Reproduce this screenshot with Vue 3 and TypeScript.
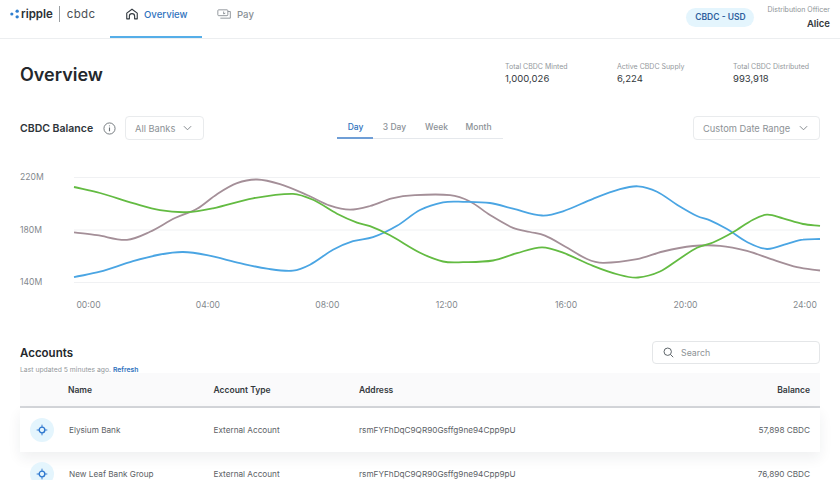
<template>
  <div class="page">
    <header class="topbar">
      <div class="brand">
        <svg class="brand-mark" viewBox="0 0 12 12" width="10" height="10">
          <circle cx="2.2" cy="6" r="1.9" fill="#2f7fd0" />
          <circle cx="8.6" cy="2.6" r="2" fill="#2f7fd0" />
          <circle cx="8.6" cy="9.4" r="2" fill="#2f7fd0" />
        </svg>
        <span class="brand-name">ripple</span>
        <span class="brand-sep" />
        <span class="brand-product">cbdc</span>
      </div>
      <nav class="nav">
        <a class="nav-item active">
          <svg viewBox="0 0 16 16" width="14" height="14" fill="none" stroke="#333a40" stroke-width="1.3" stroke-linejoin="round">
            <path d="M2 13.5V7L8 2.5 14 7v6.5h-3V10.5a3 3 0 0 0-6 0v3z" />
          </svg>
          Overview
        </a>
        <a class="nav-item">
          <svg viewBox="0 0 18 16" width="15" height="14" fill="none" stroke="#8b9196" stroke-width="1.1">
            <rect x="1" y="3" width="12" height="7" rx="1" />
            <path d="M4 13h12V5h-3M8 5v3l2-1" />
          </svg>
          Pay
        </a>
      </nav>
      <div class="account">
        <span class="currency">CBDC - USD</span>
        <div class="officer">
          <span>Distribution Officer</span>
          <strong>Alice</strong>
        </div>
      </div>
    </header>

    <section class="summary">
      <h1>Overview</h1>
      <div class="stats">
        <div v-for="stat in stats" :key="stat.label" class="stat" :style="{ width: stat.width + 'px' }">
          <span>{{ stat.label }}</span>
          <b>{{ stat.value }}</b>
        </div>
      </div>
    </section>

    <section class="controls">
      <div class="controls-left">
        <h2>CBDC Balance</h2>
        <svg viewBox="0 0 14 14" width="13" height="13" fill="none" stroke="#6c7277">
          <circle cx="7" cy="7" r="6" />
          <path d="M7 6v4M7 3.7v1" stroke-width="1.2" />
        </svg>
        <button class="select banks">
          All Banks
          <svg class="chev" viewBox="0 0 10 6" width="9" height="6"><path d="M1 1l4 4 4-4" /></svg>
        </button>
      </div>
      <div class="tabs">
        <span v-for="(tab, i) in tabs" :key="tab" class="tab" :class="{ active: i === 0 }">{{ tab }}</span>
      </div>
      <button class="select range">
        Custom Date Range
        <svg class="chev" viewBox="0 0 10 6" width="9" height="6"><path d="M1 1l4 4 4-4" /></svg>
      </button>
    </section>

    <section class="chart">
      <svg viewBox="0 0 840 160" width="840" height="160">
        <g v-for="g in grid" :key="g.label">
          <line x1="74" x2="820" :y1="g.y" :y2="g.y" class="gridline" />
          <text x="20" :y="g.y + 2.5" class="axis">{{ g.label }}</text>
        </g>
        <text v-for="t in times" :key="t.label" :x="t.x" y="143" class="axis" text-anchor="middle">{{ t.label }}</text>
        <path v-for="s in series" :key="s.color" :d="s.d" :stroke="s.color" class="line" />
      </svg>
    </section>

    <section class="accounts">
      <div class="accounts-head">
        <div>
          <h3>Accounts</h3>
          <p>Last updated 5 minutes ago. <a>Refresh</a></p>
        </div>
        <div class="search">
          <svg viewBox="0 0 14 14" width="11" height="11" fill="none" stroke="#555c62" stroke-width="1.2">
            <circle cx="6" cy="6" r="4.7" />
            <path d="M9.5 9.5L13 13" />
          </svg>
          Search
        </div>
      </div>
      <div class="row header">
        <span />
        <span>Name</span>
        <span>Account Type</span>
        <span>Address</span>
        <span class="right">Balance</span>
      </div>
      <div v-for="(acc, i) in accounts" :key="acc.name" class="row" :class="{ raised: i === 0 }">
        <span class="avatar">
          <svg viewBox="0 0 14 14" width="12" height="12" fill="none" stroke="#2f78cf">
            <circle cx="7" cy="7" r="3.3" stroke-width="1.6" />
            <path d="M7 .8v3M7 10.2v3M.8 7h3M10.2 7h3" stroke-width="1.1" />
          </svg>
        </span>
        <span class="name">{{ acc.name }}</span>
        <span>{{ acc.type }}</span>
        <span>{{ acc.address }}</span>
        <span class="right">{{ acc.balance }}</span>
      </div>
    </section>
  </div>
</template>

<script setup lang="ts">
type Pt = [number, number]

const top = 165

// Hermite spline with finite difference slopes, copes with uneven x spacing.
// The sampled y values get one light averaging pass first to take out kinks.
function smooth(pts: Pt[]): string {
  const p = pts.map(([x, y], i): Pt => {
    const prev = pts[i - 1]?.[1] ?? y
    const next = pts[i + 1]?.[1] ?? y
    return [x, (prev + 4 * y + next) / 6 - top]
  })
  const slope = (i: number) => {
    const a = p[Math.max(i - 1, 0)]
    const b = p[Math.min(i + 1, p.length - 1)]
    return (b[1] - a[1]) / (b[0] - a[0])
  }
  let d = `M${p[0][0]} ${p[0][1].toFixed(1)}`
  for (let i = 0; i < p.length - 1; i++) {
    const [x0, y0] = p[i]
    const [x1, y1] = p[i + 1]
    const dx = (x1 - x0) / 3
    const c1y = y0 + slope(i) * dx
    const c2y = y1 - slope(i + 1) * dx
    d += `C${(x0 + dx).toFixed(1)} ${c1y.toFixed(1)} ${(x1 - dx).toFixed(1)} ${c2y.toFixed(1)} ${x1} ${y1.toFixed(1)}`
  }
  return d
}

const mauve: Pt[] = [[74,232],[97,234],[127,243],[150,233],[175,216],[197,211],[217,193],[237,182],[257,178],[280,183],[307,195],[330,207],[350,211],[370,207],[392,197],[415,195],[450,194],[470,200],[490,215],[513,230],[530,232],[545,234],[565,246],[587,261],[603,264],[637,260],[663,251],[693,245],[720,245],[747,250],[773,260],[797,268],[820,271]]
const blue: Pt[] = [[74,278],[100,273],[133,260],[160,254],[183,251],[207,254],[240,264],[267,269],[293,272],[310,267],[333,248],[353,240],[373,239],[397,227],[420,208],[443,201],[463,202],[490,202],[513,208],[542,218],[563,213],[593,198],[620,188],[638,185],[657,190],[677,205],[697,218],[710,219],[727,228],[747,243],[767,252],[787,243],[803,239],[820,239]]
const green: Pt[] = [[74,186],[100,192],[133,204],[160,211],[187,213],[213,210],[253,197],[293,192],[313,198],[337,215],[357,224],[370,225],[390,233],[420,255],[443,263],[463,262],[493,262],[517,253],[542,245],[563,251],[593,267],[620,276],[638,279],[660,273],[680,258],[697,246],[713,244],[733,233],[753,218],[767,213],[783,218],[803,225],[820,226]]

const series = [
  { color: '#a48f98', d: smooth(mauve) },
  { color: '#4aa5e3', d: smooth(blue) },
  { color: '#63bb42', d: smooth(green) },
]

const grid = [
  { label: '220M', y: 177.5 - top },
  { label: '180M', y: 230 - top },
  { label: '140M', y: 282.5 - top },
]

const times = ['00:00', '04:00', '08:00', '12:00', '16:00', '20:00', '24:00'].map((label, i) => ({
  label,
  x: 88.5 + i * 119.4,
}))

const stats = [
  { label: 'Total CBDC Minted', value: '1,000,026', width: 112 },
  { label: 'Active CBDC Supply', value: '6,224', width: 116 },
  { label: 'Total CBDC Distributed', value: '993,918', width: 87 },
]

const tabs = ['Day', '3 Day', 'Week', 'Month']

const accounts = [
  { name: 'Elysium Bank', type: 'External Account', address: 'rsmFYFhDqC9QR90Gsffg9ne94Cpp9pU', balance: '57,898 CBDC' },
  { name: 'New Leaf Bank Group', type: 'External Account', address: 'rsmFYFhDqC9QR90Gsffg9ne94Cpp9pU', balance: '76,890 CBDC' },
]
</script>

<style>
html,
body {
  margin: 0;
  background: #fff;
  overflow: hidden;
}
</style>

<style scoped>
.page {
  width: 840px;
  height: 480px;
  overflow: hidden;
  font-family: Inter, "Liberation Sans", sans-serif;
  color: #25292d;
  background: #fff;
}

.topbar {
  display: flex;
  align-items: stretch;
  height: 38px;
  border-bottom: 1px solid #eceef0;
  padding: 0 10px;
}

.brand {
  display: flex;
  align-items: center;
  width: 100px;
  height: 28px;
}

.brand-mark {
  margin-right: 1px;
}

.brand-name {
  font-size: 11.5px;
  font-weight: 600;
  color: #2c3136;
}

.brand-sep {
  width: 1px;
  height: 16px;
  background: #9a9fa3;
  margin: 0 7px 0 6px;
}

.brand-product {
  font-size: 11.5px;
  color: #4b5055;
  letter-spacing: 0.3px;
}

.nav {
  display: flex;
}

.nav-item {
  display: flex;
  align-items: center;
  gap: 5px;
  box-sizing: border-box;
  width: 92px;
  height: 38px;
  padding: 0 0 10px 15px;
  font-size: 9.6px;
  font-weight: 500;
  color: #8b9196;
}

.nav-item.active {
  color: #2f72bd;
  box-shadow: inset 0 -2px 0 #55aee8;
}

.account {
  margin-left: auto;
  display: flex;
  gap: 13px;
  align-items: flex-start;
}

.currency {
  margin-top: 8px;
  width: 68px;
  height: 19px;
  line-height: 19px;
  border-radius: 10px;
  background: #e4f5fd;
  color: #2e5f9e;
  font-size: 8.5px;
  font-weight: 600;
  text-align: center;
}

.officer {
  display: flex;
  flex-direction: column;
  align-items: flex-end;
  margin-top: 5px;
  font-size: 7px;
  color: #8d9296;
}

.officer strong {
  margin-top: 4px;
  font-size: 9.5px;
  font-weight: 600;
  color: #33383c;
}

.summary {
  display: flex;
  justify-content: space-between;
  box-sizing: border-box;
  padding: 23px 20px 0;
  height: 77px;
}

h1 {
  margin: 1px 0 0;
  font-size: 18px;
  line-height: 24px;
  font-weight: 600;
  color: #24282c;
}

.stats {
  display: flex;
}

.stat {
  display: flex;
  flex-direction: column;
  font-size: 7px;
  color: #93989c;
}

.stat b {
  margin-top: 2px;
  font-size: 9.5px;
  font-weight: 400;
  color: #33383c;
}

.controls {
  display: grid;
  grid-template-columns: 317px 1fr auto;
  align-items: start;
  padding: 0 20px;
  height: 24px;
}

.controls-left {
  display: flex;
  align-items: center;
}

h2 {
  margin: 0 7px 0 0;
  width: 76px;
  white-space: nowrap;
  font-size: 10.5px;
  font-weight: 600;
  color: #2e343a;
}

.select {
  display: flex;
  align-items: center;
  justify-content: space-between;
  height: 24px;
  box-sizing: border-box;
  padding: 0 11px 0 9px;
  background: #fff;
  border: 1px solid #e9ebed;
  border-radius: 4px;
  font-family: inherit;
  font-size: 9.3px;
  color: #8d9296;
}

.banks {
  width: 79px;
  margin-left: 9px;
}

.range {
  width: 127px;
}

.chev {
  fill: none;
  stroke: #777d82;
  stroke-width: 1;
}

.tabs {
  display: flex;
  width: 166px;
  height: 23px;
  box-shadow: inset 0 -1px 0 #e5e8ec;
}

.tab {
  width: 42px;
  text-align: center;
  font-size: 8.5px;
  font-weight: 500;
  color: #8b9196;
  line-height: 22px;
  height: 23px;
  box-sizing: border-box;
  padding-left: 1px;
}

.tab.active {
  width: 36px;
  color: #2f72bd;
  border-bottom: 2px solid #6f9ed6;
}

.chart {
  height: 160px;
  margin-top: 25px;
}

.chart svg {
  display: block;
}

.gridline {
  stroke: #f0f1f3;
  stroke-width: 1;
}

.axis {
  font-size: 8.6px;
  fill: #83888d;
}

.line {
  fill: none;
  stroke-width: 1.8;
}

.accounts {
  padding: 0 20px;
  margin-top: 14px;
}

.accounts-head {
  display: flex;
  justify-content: space-between;
  height: 34px;
}

h3 {
  margin: 0;
  padding-top: 6px;
  font-size: 11.5px;
  line-height: 16px;
  font-weight: 600;
  color: #24282c;
}

.accounts-head p {
  margin: 4px 0 0;
  font-size: 6.8px;
  color: #93989c;
}

.accounts-head a {
  color: #2f72bd;
  font-weight: 600;
}

.search {
  display: flex;
  align-items: center;
  gap: 7px;
  box-sizing: border-box;
  width: 168px;
  height: 23px;
  margin-top: 2px;
  padding-left: 10px;
  border: 1px solid #e4e6e8;
  border-radius: 4px;
  font-size: 8.8px;
  color: #8d9296;
}

.row {
  display: grid;
  grid-template-columns: 48px 145.5px 145.5px 1fr auto;
  align-items: center;
  height: 44px;
  padding-right: 10px;
  font-size: 8.2px;
  color: #5c6166;
}

.row.header {
  box-sizing: border-box;
  height: 35px;
  background: #fafafb;
  border-bottom: 2px solid #d4d6da;
  font-size: 8.5px;
  font-weight: 600;
  color: #34393d;
}

.row.raised {
  box-shadow: 0 6px 14px rgba(30, 40, 60, 0.07);
  background: #fff;
}

.name {
  padding-left: 1px;
}

.right {
  text-align: right;
}

.avatar {
  display: flex;
  align-items: center;
  justify-content: center;
  width: 24px;
  height: 24px;
  margin-left: 10px;
  border-radius: 50%;
  background: #e4f5fd;
}
</style>
